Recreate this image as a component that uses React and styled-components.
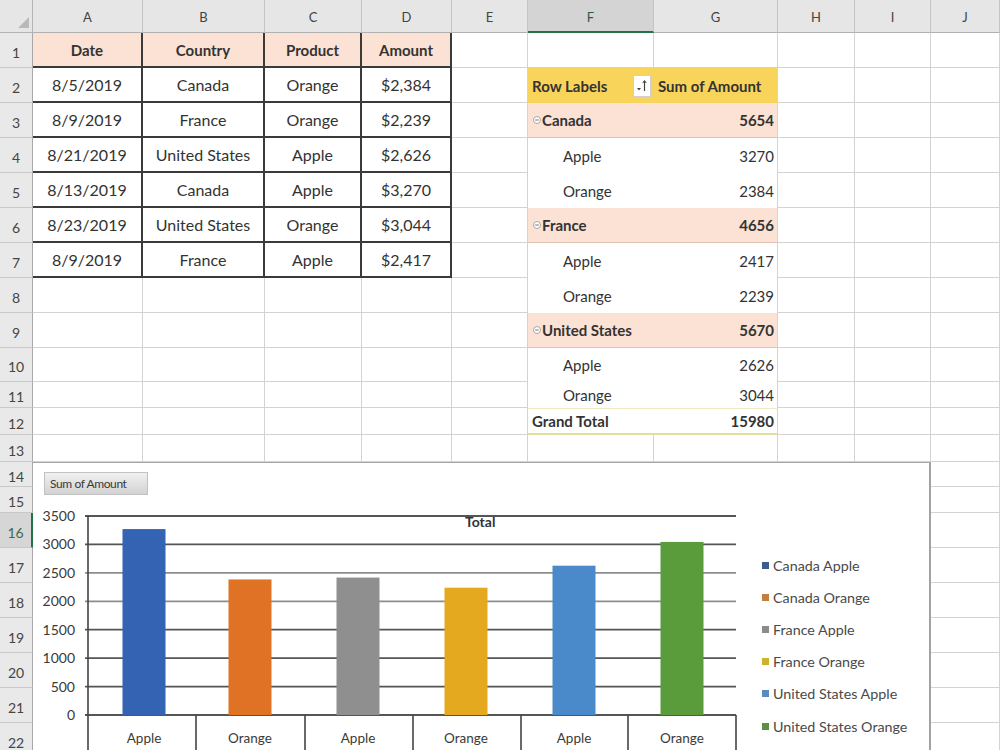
import React from "react";
import styled, { createGlobalStyle } from "styled-components";

const GlobalStyle = createGlobalStyle`
  html, body {
    margin: 0;
    padding: 0;
    overflow: hidden;
    background: #ffffff;
  }
  body {
    font-family: Lato, "Open Sans", "Liberation Sans", sans-serif;
    color: #333;
  }
`;

const COLS = ["A", "B", "C", "D", "E", "F", "G", "H", "I", "J"];
const COL_WIDTHS = [33, 110, 122, 97, 90, 76, 126, 124, 77, 76, 69];
const ROW_HEIGHTS = [35, 35, 35, 35, 35, 35, 35, 35, 35, 34, 26, 27, 27, 25, 26, 35, 35, 35, 35, 35, 35, 35];

const TEMPLATE_COLS = COL_WIDTHS.map((w) => `${w}px`).join(" ");
const TEMPLATE_ROWS = ["33px", ...ROW_HEIGHTS.map((h) => `${h}px`)].join(" ");

const TABLE = [
  ["Date", "Country", "Product", "Amount"],
  ["8/5/2019", "Canada", "Orange", "$2,384"],
  ["8/9/2019", "France", "Orange", "$2,239"],
  ["8/21/2019", "United States", "Apple", "$2,626"],
  ["8/13/2019", "Canada", "Apple", "$3,270"],
  ["8/23/2019", "United States", "Orange", "$3,044"],
  ["8/9/2019", "France", "Apple", "$2,417"],
];

const PIVOT = [
  { tone: "head", label: "Row Labels", value: "Sum of Amount" },
  { tone: "group", label: "Canada", value: "5654" },
  { tone: "item", label: "Apple", value: "3270" },
  { tone: "item", label: "Orange", value: "2384" },
  { tone: "group", label: "France", value: "4656" },
  { tone: "item", label: "Apple", value: "2417" },
  { tone: "item", label: "Orange", value: "2239" },
  { tone: "group", label: "United States", value: "5670" },
  { tone: "item", label: "Apple", value: "2626" },
  { tone: "item", label: "Orange", value: "3044" },
  { tone: "total", label: "Grand Total", value: "15980" },
];

const SERIES = [
  { name: "Canada Apple", cat: "Apple", value: 3270, bar: "#3563b4", key: "#3e5b8c" },
  { name: "Canada Orange", cat: "Orange", value: 2384, bar: "#e07226", key: "#c37f42" },
  { name: "France Apple", cat: "Apple", value: 2417, bar: "#8f8f8f", key: "#8b8b8b" },
  { name: "France Orange", cat: "Orange", value: 2239, bar: "#e4a91f", key: "#cdb22d" },
  { name: "United States Apple", cat: "Apple", value: 2626, bar: "#4a8aca", key: "#5b8cc0" },
  { name: "United States Orange", cat: "Orange", value: 3044, bar: "#5a9c3b", key: "#5e8f46" },
];

/* ---------- sheet layers ---------- */

const Sheet = styled.div`
  display: grid;
  grid-template-areas: "stack";
  width: 1000px;
`;

const CellGrid = styled.div`
  grid-area: stack;
  display: grid;
  grid-template-columns: ${TEMPLATE_COLS};
  grid-template-rows: ${TEMPLATE_ROWS};
`;

const OverlayGrid = styled.div`
  grid-area: stack;
  display: grid;
  grid-template-columns: ${TEMPLATE_COLS};
  grid-template-rows: ${TEMPLATE_ROWS};
  pointer-events: none;
`;

/* ---------- headers ---------- */

const Corner = styled.div`
  background: #e6e6e6;
  border-right: 1px solid #b4b4b4;
  border-bottom: 1px solid #b4b4b4;
  display: flex;
  align-items: flex-end;
  justify-content: flex-end;
  padding: 0 3px 4px 0;
  box-sizing: border-box;
`;

const CornerMark = styled.span`
  width: 0;
  height: 0;
  border-left: 11px solid transparent;
  border-bottom: 11px solid #b9b9b9;
`;

const ColHeader = styled.div`
  box-sizing: border-box;
  background: ${(p) => (p.$selected ? "#d4d4d4" : "#e6e6e6")};
  border-right: 1px solid #c4c4c4;
  border-bottom: ${(p) => (p.$selected ? "2px solid #217346" : "1px solid #b0b0b0")};
  color: ${(p) => (p.$selected ? "#2d5a3e" : "#444")};
  font-size: 13px;
  display: flex;
  align-items: center;
  justify-content: center;
  padding-top: 2px;
`;

const RowHeader = styled.div`
  box-sizing: border-box;
  background: ${(p) => (p.$selected ? "#d6d6d6" : "#e9e9e9")};
  border-right: ${(p) => (p.$selected ? "2px solid #217346" : "1px solid #a9a9a9")};
  border-bottom: 1px solid #c9c9c9;
  color: ${(p) => (p.$selected ? "#3d6b4e" : "#454545")};
  font-size: 14px;
  display: flex;
  align-items: center;
  justify-content: center;
  padding-top: 4px;
`;

/* ---------- cells ---------- */

const GridCell = styled.div`
  box-sizing: border-box;
  background: #fff;
  border-right: 1px solid #d3d3d3;
  border-bottom: 1px solid #d3d3d3;
`;

const TableCell = styled.div`
  box-sizing: border-box;
  background: ${(p) => (p.$head ? "#fbe2d5" : "#fff")};
  border-right: 2px solid #3a3a3a;
  border-bottom: 2px solid #3a3a3a;
  display: flex;
  align-items: center;
  justify-content: center;
  font-size: ${(p) => (p.$head ? "15px" : "16px")};
  font-weight: ${(p) => (p.$head ? 700 : 400)};
  color: #333;
  white-space: nowrap;
`;

const TONE_BG = { head: "#f9d45b", group: "#fbe2d5", item: "#fff", total: "#fff" };

const PivotLabel = styled.div`
  box-sizing: border-box;
  background: ${(p) => TONE_BG[p.$tone]};
  border-top: ${(p) => (p.$tone === "total" ? "1px solid #f0ebc6" : "none")};
  border-bottom: ${(p) =>
    p.$tone === "group" ? "1px solid #e2c4b4" : p.$tone === "total" ? "2px solid #e3dd9e" : "none"};
  display: flex;
  align-items: center;
  justify-content: space-between;
  gap: 2px;
  padding: 0 3px 0 ${(p) => (p.$tone === "item" ? "35px" : p.$tone === "group" ? "5px" : "4px")};
  font-size: 15px;
  font-weight: ${(p) => (p.$tone === "item" ? 400 : 700)};
  color: #333;
  white-space: nowrap;
`;

const PivotValue = styled(PivotLabel)`
  justify-content: ${(p) => (p.$tone === "head" ? "flex-start" : "flex-end")};
  padding: 0 3px 0 4px;
  border-right: 1px solid #d3d3d3;
`;

const LabelGroup = styled.span`
  display: flex;
  align-items: center;
  gap: 1px;
`;

const FilterButton = styled.span`
  box-sizing: border-box;
  width: 18px;
  height: 22px;
  background: #fff;
  border: 1px solid #cfcfcf;
  display: flex;
  align-items: center;
  justify-content: center;
`;

/* ---------- chart ---------- */

const ChartFrame = styled.div`
  grid-row: 15 / 24;
  grid-column: 2 / 11;
  box-sizing: border-box;
  background: #fff;
  border-top: 1px solid #a8a8a8;
  border-right: 2px solid #a2a2a2;
  display: grid;
  grid-template-columns: 712px 1fr;
  grid-template-rows: 37px 1fr;
  overflow: hidden;
`;

const FieldButton = styled.div`
  grid-column: 1;
  grid-row: 1;
  justify-self: start;
  align-self: start;
  margin: 9px 0 0 11px;
  box-sizing: border-box;
  width: 104px;
  height: 23px;
  background: linear-gradient(#f0f0f0, #d3d3d3);
  border: 1px solid #c2c2c2;
  display: flex;
  align-items: center;
  padding-left: 5px;
  font-size: 12px;
  letter-spacing: -0.4px;
  color: #3a3a3a;
  white-space: nowrap;
`;

const Plot = styled.svg`
  grid-column: 1;
  grid-row: 2;
  display: block;
  font-family: Lato, "Open Sans", "Liberation Sans", sans-serif;
`;

const Legend = styled.ul`
  grid-column: 2;
  grid-row: 2;
  list-style: none;
  margin: 0;
  padding: 49px 0 0 17px;
  display: flex;
  flex-direction: column;
`;

const LegendItem = styled.li`
  height: 32.2px;
  display: flex;
  align-items: center;
  gap: 4px;
  font-size: 14.3px;
  color: #4a4a4a;
  white-space: nowrap;
`;

const Swatch = styled.span`
  width: 7px;
  height: 7px;
  background: ${(p) => p.$color};
  flex: none;
`;

function yFor(v) {
  return 215 - (v * 199) / 3500;
}

const TICKS = [3500, 3000, 2500, 2000, 1500, 1000, 500, 0];
const SEPARATORS = [55, 163, 272, 380, 488, 595, 703];

function Chart() {
  return (
    <ChartFrame>
      <FieldButton>Sum of Amount</FieldButton>
      <Plot width="712" height="260" viewBox="0 0 712 260">
        {TICKS.map((t) => (
          <g key={t}>
            <line
              x1="52"
              x2="703"
              y1={yFor(t)}
              y2={yFor(t)}
              stroke={t === 2500 || t === 2000 ? "#8d8d8d" : "#555"}
              strokeWidth="1.8"
            />
            <text x="42" y={yFor(t) + 5} textAnchor="end" fontSize="14" fill="#3a3a3a">
              {t}
            </text>
          </g>
        ))}
        <line x1="55" x2="55" y1={yFor(3500)} y2="260" stroke="#444" strokeWidth="1.6" />
        {SEPARATORS.slice(1).map((x) => (
          <line key={x} x1={x} x2={x} y1="215" y2="260" stroke="#444" strokeWidth="1.6" />
        ))}
        {SERIES.map((s, i) => {
          const cx = 55 + 108 * (i + 0.5) + (i === 0 ? 2 : 0);
          const top = yFor(s.value);
          return (
            <g key={s.name}>
              <rect x={cx - 21.5} y={top} width="43" height={215 - top} fill={s.bar} />
              <text x={cx} y="243" textAnchor="middle" fontSize="13.5" fill="#3a3a3a">
                {s.cat}
              </text>
            </g>
          );
        })}
        <text x="432" y="27" fontSize="14" fontWeight="700" fill="#333">
          Total
        </text>
      </Plot>
      <Legend>
        {SERIES.map((s) => (
          <LegendItem key={s.name}>
            <Swatch $color={s.key} />
            {s.name}
          </LegendItem>
        ))}
      </Legend>
    </ChartFrame>
  );
}

/* ---------- icons ---------- */

function CollapseIcon() {
  return (
    <svg width="8" height="8" viewBox="0 0 8 8">
      <rect x="0.5" y="0.5" width="7" height="7" rx="3.5" fill="#fff" stroke="#a6a6a6" strokeWidth="1" />
      <line x1="2.2" x2="5.8" y1="4" y2="4" stroke="#777" strokeWidth="1" />
    </svg>
  );
}

function FilterIcon() {
  return (
    <svg width="12" height="14" viewBox="0 0 12 14">
      <path d="M1 9 L5 9 L3 11.5 Z" fill="#444" />
      <line x1="8.5" x2="8.5" y1="2" y2="12" stroke="#444" strokeWidth="1.2" />
      <path d="M6.8 4 L8.5 1.5 L10.2 4" fill="none" stroke="#444" strokeWidth="1" />
    </svg>
  );
}

/* ---------- cells ---------- */

function renderCell(r, ci) {
  const key = `${r}-${ci}`;
  if (r <= 7 && ci <= 3) {
    return (
      <TableCell key={key} $head={r === 1}>
        {TABLE[r - 1][ci]}
      </TableCell>
    );
  }
  if (r >= 2 && r <= 12 && (ci === 5 || ci === 6)) {
    const p = PIVOT[r - 2];
    if (ci === 5) {
      return (
        <PivotLabel key={key} $tone={p.tone}>
          {p.tone === "group" ? (
            <LabelGroup>
              <CollapseIcon />
              {p.label}
            </LabelGroup>
          ) : (
            <span>{p.label}</span>
          )}
          {p.tone === "head" && (
            <FilterButton>
              <FilterIcon />
            </FilterButton>
          )}
        </PivotLabel>
      );
    }
    return (
      <PivotValue key={key} $tone={p.tone}>
        {p.value}
      </PivotValue>
    );
  }
  return <GridCell key={key} />;
}

export default function App() {
  const rows = ROW_HEIGHTS.map((_, i) => i + 1);
  return (
    <>
      <GlobalStyle />
      <Sheet>
        <CellGrid>
          <Corner>
            <CornerMark />
          </Corner>
          {COLS.map((c) => (
            <ColHeader key={c} $selected={c === "F"}>
              {c}
            </ColHeader>
          ))}
          {rows.map((r) => (
            <React.Fragment key={r}>
              <RowHeader $selected={r === 16}>{r}</RowHeader>
              {COLS.map((_, ci) => renderCell(r, ci))}
            </React.Fragment>
          ))}
        </CellGrid>
        <OverlayGrid>
          <Chart />
        </OverlayGrid>
      </Sheet>
    </>
  );
}
